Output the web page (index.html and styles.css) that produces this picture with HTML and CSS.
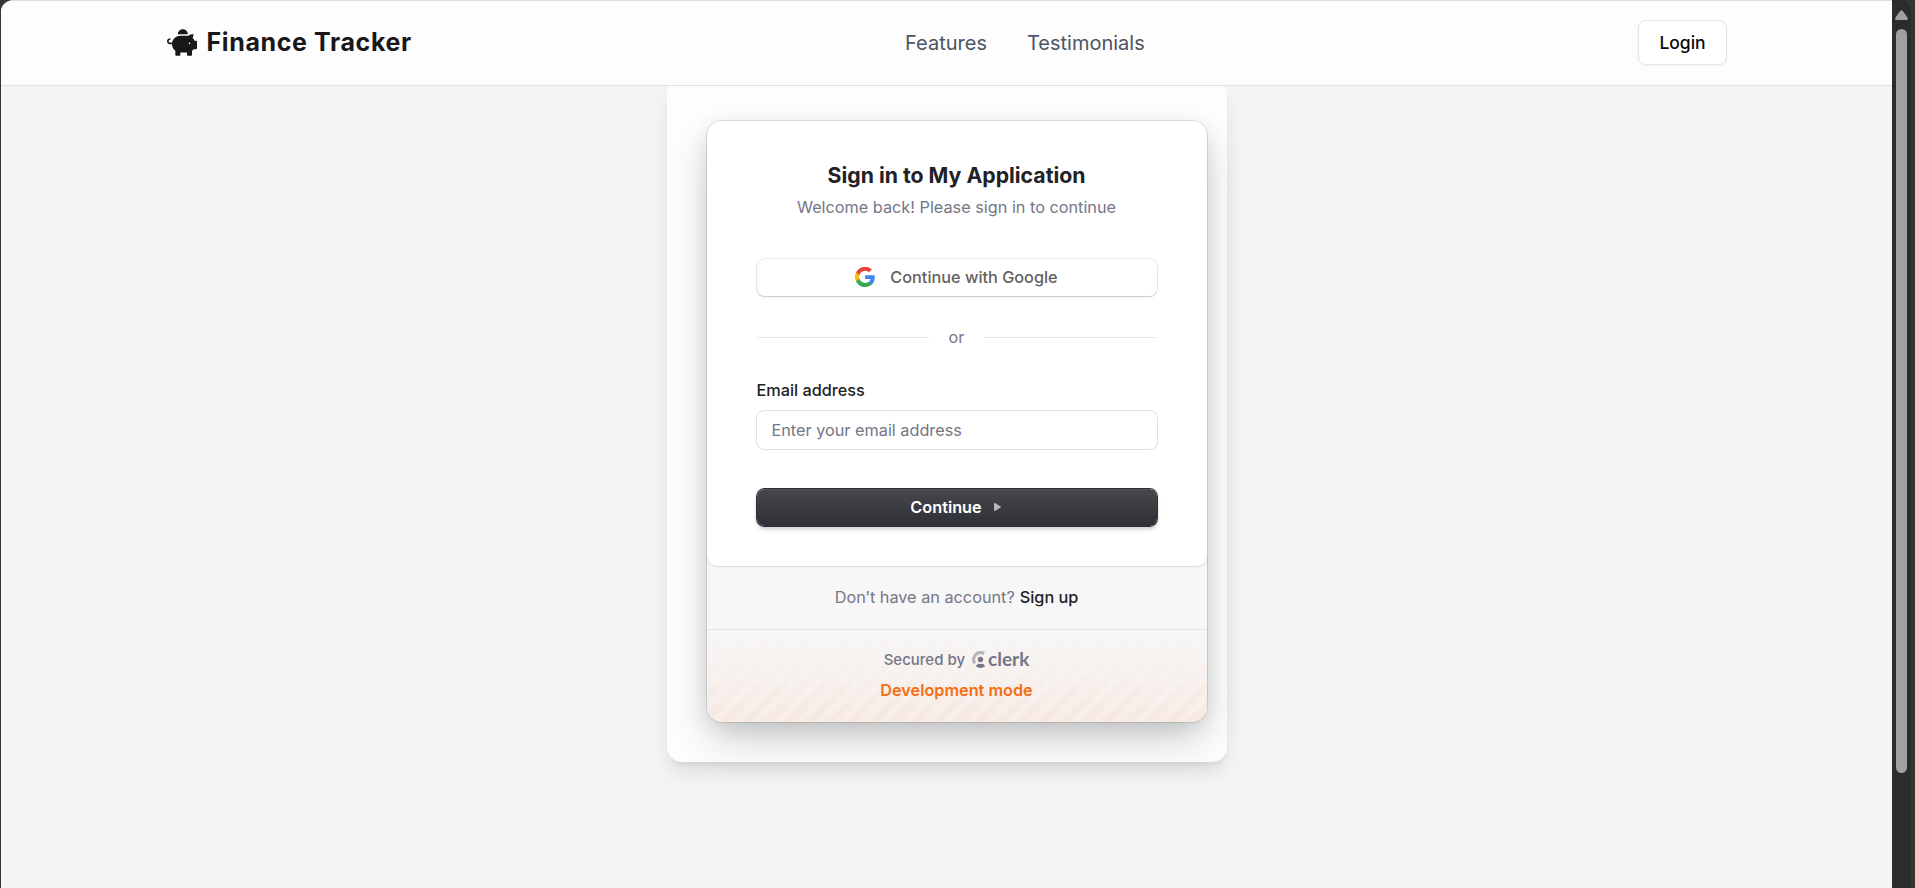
FILE: index.html
```html
<!DOCTYPE html>
<html lang="en">
<head>
<meta charset="utf-8">
<title>Finance Tracker</title>
<link rel="stylesheet" href="styles.css">
</head>
<body>
<div class="window">
  <div class="page">
    <header class="header">
      <a class="brand">
        <svg class="brand-icon" viewBox="0 0 576 512"><path fill="currentColor" d="M560 224h-29.500c-8.800-20-21.600-37.700-37.400-52.500L512 96h-32c-29.400 0-55.400 13.500-73 34.300-7.600-1.100-15.100-2.300-23-2.300H256c-77.400 0-141.900 55-156.800 128H56c-14.800 0-26.500-13.500-23.500-28.800C34.700 215.800 45.400 208 57 208h1c3.300 0 6-2.700 6-6v-20c0-3.300-2.700-6-6-6-28.500 0-53.900 20.400-57.500 48.600C-3.900 258.800 22.700 288 56 288h40c0 52.200 25.400 98.100 64 127.300V496c0 8.800 7.200 16 16 16h64c8.800 0 16-7.200 16-16v-48h128v48c0 8.800 7.200 16 16 16h64c8.800 0 16-7.200 16-16v-80.700c11.800-8.900 22.300-19.400 31.300-31.300H560c8.800 0 16-7.200 16-16V240c0-8.800-7.200-16-16-16zm-128 64c-8.800 0-16-7.200-16-16s7.200-16 16-16 16 7.200 16 16-7.200 16-16 16zM256 96h128c5.400 0 10.700.4 15.900.8 0-.3.100-.5.100-.8 0-53-43-96-96-96s-96 43-96 96c0 2.100.5 4.100.6 6.200 15.200-3.900 31-6.200 47.400-6.200z"/></svg>
        <span>Finance Tracker</span>
      </a>
      <nav class="nav"><a>Features</a><a>Testimonials</a></nav>
      <button class="login">Login</button>
    </header>
    <main class="content">
      <div class="panel">
        <div class="card">
          <section class="card-main">
            <h1 class="title">Sign in to My Application</h1>
            <p class="subtitle">Welcome back! Please sign in to continue</p>
            <button class="google">
              <svg class="google-icon" viewBox="0 0 48 48"><path fill="#4285F4" d="M47.500 24.550c0-1.630-.15-3.200-.42-4.710H24.240v8.920h13.060c-.56 3.030-2.270 5.600-4.840 7.320v6.080h7.830c4.580-4.220 7.210-10.430 7.210-17.610z"/><path fill="#34A853" d="M24.240 48c6.550 0 12.040-2.170 16.050-5.840l-7.830-6.080c-2.170 1.450-4.950 2.310-8.220 2.310-6.320 0-11.670-4.270-13.580-10.010H2.570v6.280C6.560 42.570 14.760 48 24.240 48z"/><path fill="#FBBC05" d="M10.660 28.380a14.430 14.430 0 0 1 0-9.180v-6.280H2.570a24.200 24.200 0 0 0 0 21.740z"/><path fill="#EA4335" d="M24.240 9.200c3.560 0 6.760 1.220 9.280 3.630l6.950-6.950C36.270 1.960 30.780-.42 24.240-.42 14.760-.42 6.560 5.020 2.570 12.920l8.090 6.280c1.910-5.740 7.260-10 13.580-10z"/></svg>
              <span>Continue with Google</span>
            </button>
            <div class="divider"><i></i><span>or</span><i></i></div>
            <label class="label" for="email">Email address</label>
            <input class="input" id="email" type="email" placeholder="Enter your email address">
            <button class="continue"><span>Continue</span><svg class="arrow" viewBox="0 0 7 8"><path fill="currentColor" d="M0 .8v6.400c0 .7.600.9 1.100.7L6.600 4.600c.5-.3.500-.9 0-1.200L1.100.1C.6-.1 0 .1 0 .8z"/></svg></button>
          </section>
          <div class="signup"><span>Don’t have an account?</span><a>Sign up</a></div>
          <footer class="secured">
            <div class="secured-row"><span>Secured by</span>
              <span class="clerk"><svg class="clerk-icon" viewBox="0 0 14 17"><path fill="none" stroke="currentColor" stroke-width="3.200" opacity=".5" d="M12.100 2.700A6.800 6.800 0 0 0 2.900 12.400"/><circle cx="8.500" cy="8.500" r="2.700" fill="currentColor"/><path fill="currentColor" d="M12.700 14.600c.4.400.4.900-.1 1.200a8.500 8.500 0 0 1-8.200 0c-.5-.3-.5-.8-.1-1.200l1.600-1.600c.3-.3.800-.4 1.200-.2a5 5 0 0 0 2.800 0c.4-.2.900-.1 1.200.2z"/></svg><b>clerk</b></span>
            </div>
            <div class="dev">Development mode</div>
          </footer>
        </div>
      </div>
    </main>
  </div>
  <aside class="scrollbar"><svg class="scroll-up" viewBox="0 0 13 10"><path d="M5.300.8 .4 7.700C-.2 9 .4 10 1.500 10h10c1.100 0 1.700-1 1.100-2.300L7.700.8c-.6-.9-1.800-.9-2.400 0z" fill="#a0a0a0"/></svg><div class="thumb"></div></aside>
</div>
</body>
</html>
```
FILE: styles.css
```css
* { box-sizing: border-box; }
body { margin: 0; height: 888px; overflow: hidden; background: #373536; font-family: Inter, "Liberation Sans", sans-serif; }
button, input { font-family: inherit; margin: 0; }
.window { display: flex; height: 888px; padding-left: 1px; }
.page { width: 1891px; height: 888px; background: #f3f4f6; border-top: 1px solid #dedede; border-radius: 12px 0 0 0; overflow: hidden; }
.header { position: relative; z-index: 1; display: flex; justify-content: space-between; align-items: center; height: 85px; padding: 0 165px 2px 166px; background: #fdfdfd; border-bottom: 1px solid #e1e2e4; }
.brand { display: flex; align-items: center; gap: 9.5px; color: #18181b; font-size: 25px; font-weight: 700; letter-spacing: .625px; }
.brand-icon { width: 30px; height: 27px; }
.nav { display: flex; gap: 40px; padding-top: 1px; color: #4b5563; font-size: 20px; }
.login { width: 89px; height: 45px; padding: 0; background: #fff; border: 1px solid #e4e4e7; border-radius: 8px; color: #09090b; font-size: 17.5px; font-weight: 500; box-shadow: 0 1px 3px rgba(0,0,0,.05); }
.content { display: flex; justify-content: center; margin-top: -6px; }
.panel { width: 560px; height: 682px; padding: 41px 20px 40px 40px; background: #fdfdfd; border-radius: 15px; box-shadow: 0 12.5px 18.75px -3.75px rgba(0,0,0,.1), 0 5px 7.5px -5px rgba(0,0,0,.1); }
.card { width: 500px; height: 601px; border-radius: 15px; background: #f7f7f7; box-shadow: 0 0 0 1px rgba(0,0,0,.1), 0 18.75px 43.75px -6.25px rgba(25,28,33,.24), 0 6.25px 18.75px rgba(0,0,0,.09); overflow: hidden; }
.card-main { height: 445px; padding: 39px 50px 0; display: flex; flex-direction: column; background: #fff; border-radius: 0 0 10px 10px; box-shadow: 0 0 3px rgba(0,0,0,.12), 0 1px 1px rgba(0,0,0,.08); }
.title { margin: 0; font-size: 21.25px; line-height: 30px; font-weight: 700; color: #212126; text-align: center; }
.subtitle { margin: 6px 0 0; font-size: 16.25px; line-height: 23px; color: #747686; text-align: center; }
.google { display: flex; align-items: center; justify-content: center; gap: 15px; height: 37px; margin-top: 40px; padding: 0 0 1px; flex: none; background: #fff; border: 0; border-radius: 7.5px; color: #626262; font-size: 16.25px; font-weight: 500; box-shadow: 0 0 0 1px rgba(0,0,0,.08), 0 1px 1px rgba(0,0,0,.1), 0 2px 3px rgba(0,0,0,.04); }
.google-icon { width: 20px; height: 20px; }
.divider { display: flex; align-items: center; gap: 20px; height: 23px; margin-top: 30px; color: #747686; font-size: 16.25px; }
.divider span { padding-bottom: 2px; }
.divider i { flex: 1; height: 1px; background: #e9e9eb; }
.label { margin-top: 30px; height: 23px; font-size: 16.25px; line-height: 23px; font-weight: 500; color: #212126; }
.input { height: 38px; margin-top: 9px; flex: none; padding: 0 15px; border: 0; border-radius: 7.5px; background: #fff; font-size: 16.25px; color: #212126; box-shadow: 0 0 0 1px rgba(0,0,0,.12); }
.input::placeholder { color: #747686; opacity: 1; }
.continue { display: flex; align-items: center; justify-content: center; gap: 12px; height: 37px; margin-top: 40px; padding: 0 2px 1px 0; flex: none; border: 0; border-radius: 7.5px; background: linear-gradient(#47474c, #2f3037); color: #fff; font-size: 16.25px; font-weight: 600; box-shadow: 0 0 0 1px #2f3037, inset 0 1px 1px rgba(255,255,255,.07), 0 3px 4px rgba(0,0,0,.22); }
.arrow { width: 7px; height: 8px; color: #b9b9bb; }
.signup { display: flex; align-items: center; justify-content: center; gap: 5px; height: 63px; padding-bottom: 2px; font-size: 16.25px; color: #747686; }
.signup a { color: #212126; font-weight: 500; }
.secured { height: 93px; padding-top: 18px; border-top: 1px solid #e5e5e5; text-align: center; background: linear-gradient(#f7f7f7, rgba(247,247,247,0)), repeating-linear-gradient(-45deg, #f7eeea 0 7.5px, #f7e8e0 7.5px 15px); }
.secured-row { display: flex; align-items: center; justify-content: center; gap: 7px; height: 22px; color: #747686; font-size: 15px; font-weight: 500; }
.clerk { display: flex; align-items: center; gap: 2px; }
.clerk-icon { width: 14px; height: 17px; }
.clerk b { font: 700 19px/20px Lato, sans-serif; }
.dev { margin-top: 9px; font-size: 16.25px; line-height: 23px; font-weight: 600; color: #f66e14; }
.scrollbar { width: 19px; height: 888px; padding-top: 10px; display: flex; flex-direction: column; align-items: center; gap: 9px; background: #2c2c2c; border-top-right-radius: 10px; }
.scroll-up { width: 13px; height: 10px; }
.thumb { width: 11px; height: 744px; border-radius: 6px; background: #a0a0a0; }
```
